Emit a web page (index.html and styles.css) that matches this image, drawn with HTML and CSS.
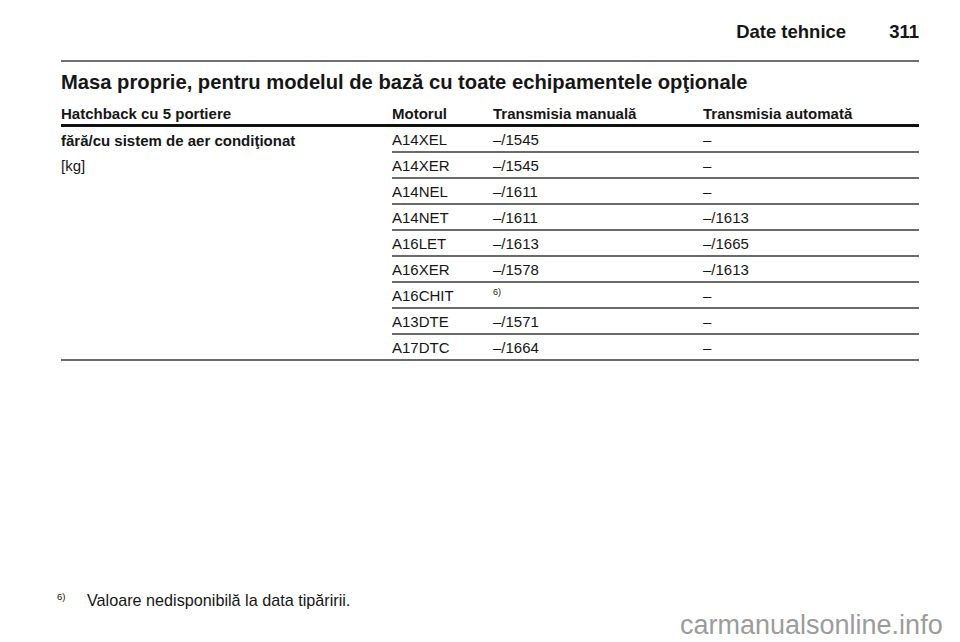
FILE: index.html
```html
<!DOCTYPE html>
<html lang="ro">
<head>
<meta charset="utf-8">
<link rel="stylesheet" href="styles.css">
</head>
<body>
<div class="page">
  <header class="pagehead">
    <span class="section">Date tehnice</span>
    <span class="pageno">311</span>
  </header>
  <h1 class="title">Masa proprie, pentru modelul de bază cu toate echipamentele opţionale</h1>
  <div class="thead">
    <div class="c1">Hatchback cu 5 portiere</div>
    <div class="c2">Motorul</div>
    <div class="c3">Transmisia manuală</div>
    <div class="c4">Transmisia automată</div>
  </div>
  <div class="tbody">
    <div class="c1 label">
      <div class="strong">fără/cu sistem de aer condiţionat</div>
      <div>[kg]</div>
    </div>
    <div class="rows">
      <div class="row"><div class="c2">A14XEL</div><div class="c3">–/1545</div><div class="c4">–</div></div>
      <div class="row"><div class="c2">A14XER</div><div class="c3">–/1545</div><div class="c4">–</div></div>
      <div class="row"><div class="c2">A14NEL</div><div class="c3">–/1611</div><div class="c4">–</div></div>
      <div class="row"><div class="c2">A14NET</div><div class="c3">–/1611</div><div class="c4">–/1613</div></div>
      <div class="row"><div class="c2">A16LET</div><div class="c3">–/1613</div><div class="c4">–/1665</div></div>
      <div class="row"><div class="c2">A16XER</div><div class="c3">–/1578</div><div class="c4">–/1613</div></div>
      <div class="row"><div class="c2">A16CHIT</div><div class="c3"><sup class="fn">6)</sup></div><div class="c4">–</div></div>
      <div class="row"><div class="c2">A13DTE</div><div class="c3">–/1571</div><div class="c4">–</div></div>
      <div class="row"><div class="c2">A17DTC</div><div class="c3">–/1664</div><div class="c4">–</div></div>
    </div>
  </div>
  <div class="spacer"></div>
  <footer class="footnote">
    <span class="fnmark">6)</span>
    <span class="fntext">Valoare nedisponibilă la data tipăririi.</span>
  </footer>
</div>
<div class="watermark">carmanualsonline.info</div>
</body>
</html>
```
FILE: styles.css
```css
html, body {
  margin: 0;
  padding: 0;
  background: #fff;
}
body {
  width: 960px;
  height: 642px;
  overflow: hidden;
  position: relative;
  font-family: "Liberation Sans", Arial, sans-serif;
  color: #161616;
}
.page {
  display: flex;
  flex-direction: column;
  padding: 0 41px 0 61px;
  height: 642px;
  box-sizing: border-box;
}
.pagehead {
  display: flex;
  justify-content: flex-end;
  align-items: baseline;
  gap: 43px;
  height: 62px;
  box-sizing: border-box;
  padding-top: 21px;
  border-bottom: 2px solid #707070;
  font-weight: bold;
  font-size: 18.5px;
}
.title {
  margin: 0;
  font-size: 20.2px;
  font-weight: bold;
  line-height: 24px;
  padding-top: 8px;
}
.thead {
  display: flex;
  font-size: 15px;
  font-weight: bold;
  line-height: 20px;
  padding-top: 10px;
  height: 20px;
  border-bottom: 3px solid #111;
}
.c1 { width: 331px; flex: none; }
.c2 { width: 101px; flex: none; }
.c3 { width: 210px; flex: none; }
.c4 { flex: 1; }
.tbody {
  display: flex;
  border-bottom: 2px solid #6a6a6a;
  font-size: 15px;
}
.label {
  line-height: 25px;
  padding-top: 1px;
}
.strong { font-weight: bold; }
.rows { flex: 1; display: flex; flex-direction: column; }
.row {
  display: flex;
  height: 24px;
  line-height: 26px;
  border-bottom: 2px solid #6a6a6a;
}
.row:last-child { border-bottom: none; height: 24px; }
.fn {
  font-size: 9px;
  vertical-align: top;
  line-height: 18px;
}
.spacer { flex: 1; }
.footnote {
  display: flex;
  align-items: baseline;
  margin-left: -4px;
  margin-bottom: 32px;
  font-size: 16.2px;
}
.fnmark {
  font-size: 9.5px;
  width: 30px;
  position: relative;
  top: -6px;
}
.watermark {
  position: absolute;
  left: 680px;
  top: 610px;
  font-size: 27px;
  color: #9c9c9c;
}
```
